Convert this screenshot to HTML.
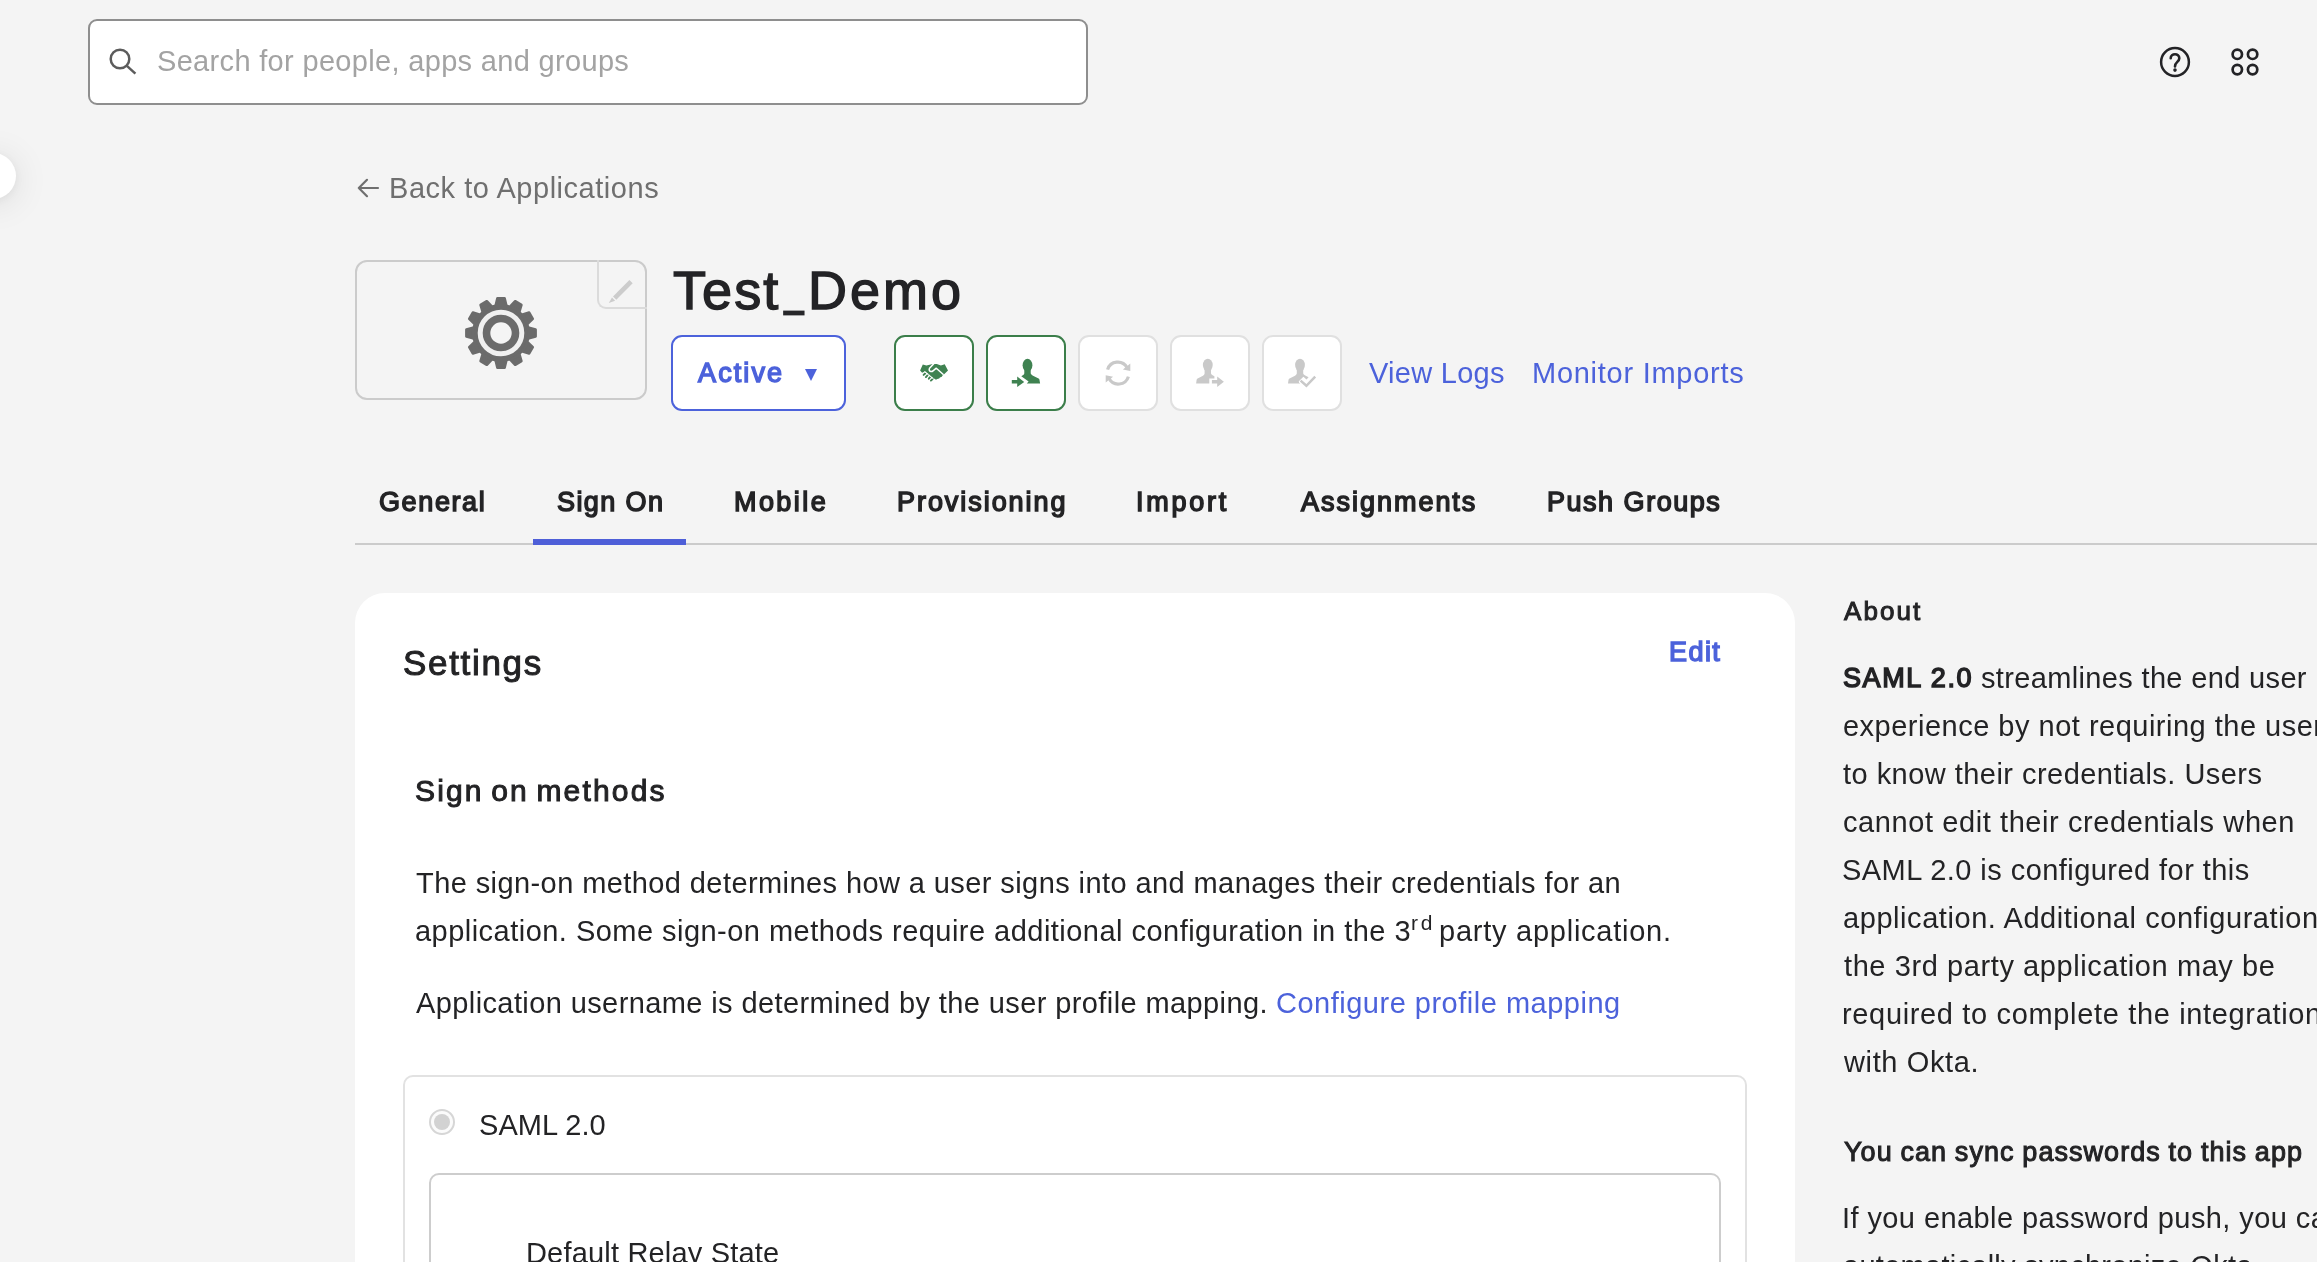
<!DOCTYPE html>
<html lang="en">
<head>
<meta charset="utf-8">
<title>Test_Demo - Sign On</title>
<style>
*{box-sizing:border-box;margin:0;padding:0}
html,body{width:2317px;height:1262px;overflow:hidden;background:#f4f4f4}
body{position:relative;font-family:"Liberation Sans",Arial,sans-serif;color:#232325;font-size:28px}
.abs{position:absolute;white-space:nowrap}
a{text-decoration:none;color:#4c62db}
.t{position:absolute;white-space:nowrap;line-height:1;will-change:transform}

/* top bar */
#search{left:88px;top:19px;width:1000px;height:86px;border:2px solid #8e8e8e;border-radius:9px;background:#fff}
#search svg{position:absolute;left:16px;top:23.75px}
#search .ph{position:absolute;will-change:transform;font-size:29px;color:#a3a3a3;line-height:1;white-space:nowrap}

/* toggle */
#toggle{left:-30px;top:153px;width:46px;height:46px;border-radius:50%;background:#fff;box-shadow:0 4px 36px rgba(0,0,0,.11),0 2px 8px rgba(0,0,0,.05)}

/* back */
.grey{color:#6f6f6f}
.t.b{font-weight:normal;font-size:27px;-webkit-text-stroke:1.45px currentColor}
.blue{color:#4c62db}
.hd{font-weight:normal;-webkit-text-stroke:1px #232325}
p.t,span.t,a.t{font-size:29px}
b.t{font-size:27px;font-weight:normal;-webkit-text-stroke:1.45px currentColor}

/* logo */
#logo{left:355px;top:260px;width:292px;height:140px;border:2px solid #cbcbcb;border-radius:12px}
#logo .edit{position:absolute;right:-2px;top:-2px;width:50px;height:49px;border-left:2px solid #dbdbdb;border-bottom:2px solid #dbdbdb;border-bottom-left-radius:9px}

span.t.ttl{font-size:54px;font-weight:normal;color:#232326;-webkit-text-stroke:1.4px #232326}

#active{left:671px;top:335px;width:175px;height:76px;border:2px solid #4c62db;border-radius:11px;background:#fff}
#active .arr{position:absolute;left:132.4px;top:32px;width:0;height:0;border-left:6.7px solid transparent;border-right:6.7px solid transparent;border-top:12.6px solid #4c62db}

.ib{position:absolute;top:335px;width:80px;height:76px;border-radius:11px;background:#fff;border:2px solid #e0e0e0}
.ib.on{border-color:#3b7e4a}
.ib svg{position:absolute;left:0;top:0}

/* tabs */
#tabline{left:355px;top:543px;width:1962px;height:2px;background:#cbcbcb}
#tabsel{left:533px;top:539px;width:153px;height:6px;background:#4e5fd8}

/* card */
#card{left:355px;top:593px;width:1440px;height:700px;background:#fff;border-radius:30px}
#box1{left:403px;top:1075px;width:1344px;height:300px;border:2px solid #e2e2e2;border-radius:10px}
#box2{left:429px;top:1173px;width:1292px;height:300px;border:2px solid #cdcdcd;border-radius:10px}
#radio{left:429px;top:1109px;width:26px;height:26px;border-radius:50%;border:2px solid #d6d6d6;background:#fbfbfb}
#radio i{position:absolute;left:3px;top:3px;width:16px;height:16px;border-radius:50%;background:#d2d2d2}
</style>
</head>
<body>

<div class="abs" id="search">
  <svg width="34" height="34" viewBox="0 0 34 34" fill="none" stroke="#5c5c5c" stroke-width="2.5" stroke-linecap="butt"><circle cx="14" cy="14" r="9.3"/><path d="M20.6 20.6 L29.4 28.6"/></svg>
  <span class="ph" id="ph" style="left:66.65px;top:26px;letter-spacing:0.326px">Search for people, apps and groups</span>
</div>

<svg class="abs" style="left:2155px;top:42px" width="40" height="40" viewBox="0 0 40 40" fill="none" stroke="#232326" stroke-width="2.5" stroke-linecap="round" stroke-linejoin="round">
  <circle cx="20" cy="20" r="13.9"/>
  <path d="M15.7 16.3 C15.7 11 24.3 11 24.3 16.2 C24.3 19.9 20 19.9 20 24.4" stroke-width="2.6"/>
  <circle cx="20" cy="28.1" r="1.1" fill="#232326" stroke-width="1.4"/>
</svg>
<svg class="abs" style="left:2225px;top:42px" width="40" height="40" viewBox="0 0 40 40" fill="none" stroke="#232326" stroke-width="2.7">
  <circle cx="12.3" cy="12.3" r="4.7"/><circle cx="27.6" cy="12.3" r="4.7"/><circle cx="12.3" cy="27.6" r="4.7"/><circle cx="27.6" cy="27.6" r="4.7"/>
</svg>

<div class="abs" id="toggle"></div>

<svg class="abs" style="left:355px;top:174px" width="28" height="28" viewBox="0 0 28 28" fill="none" stroke="#6f6f6f" stroke-width="2.2" stroke-linecap="round" stroke-linejoin="round"><path d="M23 14 H3.8 M12 5.8 L3.8 14 L12 22.2"/></svg>
<a class="t grey" id="back" style="left:389.35px;top:174px;letter-spacing:0.533px">Back to Applications</a>

<div class="abs" id="logo"><div class="edit"></div></div>
<svg class="abs" style="left:460px;top:292px" width="82" height="82" viewBox="-41 -41 82 82">
<g fill="#6b6b6b" stroke="#6b6b6b" stroke-width="2.6" stroke-linejoin="round"><circle r="27.6"/><path transform="rotate(0)" d="M-5.2 -28 L-3.6 -34.6 L3.6 -34.6 L5.2 -28 Z"/><path transform="rotate(30)" d="M-5.2 -28 L-3.6 -34.6 L3.6 -34.6 L5.2 -28 Z"/><path transform="rotate(60)" d="M-5.2 -28 L-3.6 -34.6 L3.6 -34.6 L5.2 -28 Z"/><path transform="rotate(90)" d="M-5.2 -28 L-3.6 -34.6 L3.6 -34.6 L5.2 -28 Z"/><path transform="rotate(120)" d="M-5.2 -28 L-3.6 -34.6 L3.6 -34.6 L5.2 -28 Z"/><path transform="rotate(150)" d="M-5.2 -28 L-3.6 -34.6 L3.6 -34.6 L5.2 -28 Z"/><path transform="rotate(180)" d="M-5.2 -28 L-3.6 -34.6 L3.6 -34.6 L5.2 -28 Z"/><path transform="rotate(210)" d="M-5.2 -28 L-3.6 -34.6 L3.6 -34.6 L5.2 -28 Z"/><path transform="rotate(240)" d="M-5.2 -28 L-3.6 -34.6 L3.6 -34.6 L5.2 -28 Z"/><path transform="rotate(270)" d="M-5.2 -28 L-3.6 -34.6 L3.6 -34.6 L5.2 -28 Z"/><path transform="rotate(300)" d="M-5.2 -28 L-3.6 -34.6 L3.6 -34.6 L5.2 -28 Z"/><path transform="rotate(330)" d="M-5.2 -28 L-3.6 -34.6 L3.6 -34.6 L5.2 -28 Z"/></g>
<circle r="20.8" fill="none" stroke="#f0f0f0" stroke-width="5"/>
<circle r="10.7" fill="#f4f4f4"/>
</svg>
<svg class="abs" style="left:600px;top:263px" width="46" height="46" viewBox="600 263 46 46">
<path d="M613 296.4 L629.4 280 L632.7 283.3 L616.3 299.7 Z" fill="#cccccc"/>
<path d="M612 297.6 L615.1 300.7 L608.8 302.9 Z" fill="#cccccc"/>
</svg>
<h1 style="font-size:inherit;font-weight:normal"><span class="t ttl" id="title" style="left:672.64px;top:263px;letter-spacing:2.068px">Test</span><span class="t" id="titleu" style="left:784.8px;top:281px;font-size:32px;-webkit-text-stroke:2.75px #262629;color:#262629">_</span><span class="t ttl" id="title2" style="left:807.55px;top:263px;letter-spacing:3.018px">Demo</span></h1>

<div class="abs" id="active"><span class="arr"></span></div>
<span class="t b blue" id="activel" style="left:697.89px;top:360px;letter-spacing:2.121px">Active</span>

<div class="ib on" style="left:894px"></div>
<div class="ib on" style="left:986px"></div>
<div class="ib" style="left:1078px"></div>
<div class="ib" style="left:1170px"></div>
<div class="ib" style="left:1262px"></div>

<svg class="abs" style="left:894px;top:335px" width="80" height="76" viewBox="894 335 80 76">
<path fill="#3f8251" d="M920.1 370.6 L922.8 364.5 L926.4 365.6 L932.8 364.1 L936.8 364.1 L940.9 365.6 L944.7 364.3 L948 370.4 L944.4 373.9 L942.5 375.6 L941.8 376.8 L939.9 377.5 L939.2 378.4 L937.3 379 L936.6 379.6 L935.4 379.4 L925.2 371.2 L922.1 372.7 Z"/>
<path fill="none" stroke="#fff" stroke-width="1.5" stroke-linejoin="round" d="M934 363.5 L929.5 368.3 Q928.5 370.9 930.8 371.5 Q932 371.8 933 370.9 L936.3 368.2 L943.6 374.8"/>
<path fill="none" stroke="#3f8251" stroke-width="1.9" stroke-linecap="round" d="M925.4 373.2 L923.6 374.9 M927.9 374.9 L925.9 377.1 M930.5 376.6 L928.8 378.7 M933.2 378.5 L930.9 380.6"/>
<path fill="none" stroke="#fff" stroke-width="1" d="M924.3 371.6 L935.6 380.7"/>
</svg>
<svg class="abs" style="left:986px;top:335px" width="80" height="76" viewBox="986 335 80 76">
<g fill="#3f8251">
<ellipse cx="1027.5" cy="365.2" rx="4.9" ry="6.4"/>
<path d="M1024.3 369 L1030.7 369 L1030.7 373.6 Q1031.4 375 1033 375.8 L1038.6 378.6 Q1039.4 379 1039.5 380 L1040.1 383.6 L1026.8 383.6 L1028.6 381.4 L1021.3 376.3 L1022.4 375.6 Q1023.9 374.9 1024.3 373.6 Z"/>
<path d="M1011.8 380.1 L1017.2 380.1 L1017.2 376.6 L1024.2 381.9 L1017.2 387.1 L1017.2 383.6 L1011.8 383.6 Z"/>
</g>
</svg>
<svg class="abs" style="left:1078px;top:335px" width="80" height="76" viewBox="1078 335 80 76">
<g fill="none" stroke="#c9c9c9" stroke-width="3.2">
<path d="M1107.6 369.6 A10.6 10.6 0 0 1 1127 367.6"/>
<path d="M1128.4 376.6 A10.6 10.6 0 0 1 1109 378.6"/>
</g>
<path fill="#c9c9c9" d="M1130.3 363.6 L1130.3 371 L1122.9 369.4 Z M1105.7 382.6 L1105.7 375.2 L1113.1 376.8 Z"/>
</svg>
<svg class="abs" style="left:1170px;top:335px" width="80" height="76" viewBox="1170 335 80 76">
<g fill="#c9c9c9">
<ellipse cx="1207.8" cy="365.1" rx="4.9" ry="6.4"/>
<path d="M1204.6 369 L1211 369 L1211 373.4 Q1211.4 374.6 1212.6 375.2 L1214.4 376.2 L1214.4 378.4 L1209.3 378.4 L1209.3 383.5 L1196.1 383.5 L1196.6 380 Q1196.8 379 1197.6 378.6 L1203 375.8 Q1204.4 375 1204.6 373.6 Z"/>
<path d="M1211.9 379.9 L1217.2 379.9 L1217.2 376.6 L1223.9 381.7 L1217.2 386.9 L1217.2 383.5 L1211.9 383.5 Z"/>
</g>
</svg>
<svg class="abs" style="left:1262px;top:335px" width="80" height="76" viewBox="1262 335 80 76">
<g fill="#c9c9c9">
<ellipse cx="1300" cy="365.1" rx="4.9" ry="6.4"/>
<path d="M1296.8 369 L1303.2 369 L1303.2 373.4 Q1303.6 374.6 1304.8 375.2 L1308.6 377.2 L1306.5 379.6 L1303.4 376.8 L1298.6 381.6 L1300.6 383.5 L1288 383.5 L1288.5 380 Q1288.7 379 1289.5 378.6 L1295 375.8 Q1296.4 375 1296.8 373.6 Z"/>
</g>
<path fill="none" stroke="#fff" stroke-width="5" d="M1300.6 380.6 L1306.4 385.8 L1312 380"/><path fill="none" stroke="#c9c9c9" stroke-width="2.5" d="M1300.6 380.6 L1306.4 385.8 L1315.2 376.6"/>
</svg>
<a class="t" id="vlogs" style="left:1368.75px;top:359px;letter-spacing:0.278px">View Logs</a>
<a class="t" id="mimp" style="left:1531.75px;top:359px;letter-spacing:0.736px">Monitor Imports</a>

<div class="abs" id="tabline"></div>
<div class="abs" id="tabsel"></div>
<span class="t b" id="tab1" style="left:379.00px;top:489px;letter-spacing:1.615px">General</span>
<span class="t b" id="tab2" style="left:556.61px;top:489px;letter-spacing:1.397px">Sign On</span>
<span class="t b" id="tab3" style="left:733.66px;top:489px;letter-spacing:2.429px">Mobile</span>
<span class="t b" id="tab4" style="left:896.75px;top:489px;letter-spacing:1.949px">Provisioning</span>
<span class="t b" id="tab5" style="left:1135.50px;top:489px;letter-spacing:2.747px">Import</span>
<span class="t b" id="tab6" style="left:1300.86px;top:489px;letter-spacing:1.979px">Assignments</span>
<span class="t b" id="tab7" style="left:1547.16px;top:489px;letter-spacing:1.515px">Push Groups</span>

<div class="abs" id="card"></div>
<h2 class="t hd" id="settings" style="left:402.75px;top:645px;letter-spacing:1.684px;font-size:35px">Settings</h2>
<a class="t b" id="edit" style="left:1668.88px;top:639px;letter-spacing:1.431px">Edit</a>
<h3 class="t hd" id="som" style="left:414.50px;top:776px;letter-spacing:2.168px;font-size:30px;word-spacing:-3px">Sign on methods</h3>

<p class="t" id="p1a" style="left:415.96px;top:869px;letter-spacing:0.413px">The sign-on method determines how a user signs into and manages their credentials for an</p>
<p class="t" id="p1b" style="left:415.00px;top:917px;letter-spacing:0.470px">application. Some sign-on methods require additional configuration in the 3</p>
<sup class="t" id="p1s" style="left:1410.77px;top:912px;letter-spacing:2.733px;font-size:21px">rd</sup>
<p class="t" id="p1c" style="left:1438.75px;top:917px;letter-spacing:0.752px">party application.</p>
<p class="t" id="p2a" style="left:416.00px;top:989px;letter-spacing:0.397px">Application username is determined by the user profile mapping.</p>
<a class="t" id="p2b" style="left:1275.65px;top:989px;letter-spacing:0.503px">Configure profile mapping</a>

<div class="abs" id="box1"></div>
<div class="abs" id="radio"><i></i></div>
<span class="t" id="saml" style="left:478.62px;top:1111px;letter-spacing:0.054px">SAML 2.0</span>
<div class="abs" id="box2"></div>
<span class="t" id="drs" style="left:526.25px;top:1239px;letter-spacing:0.182px">Default Relay State</span>

<h3 class="t hd" id="about" style="left:1843.70px;top:598px;letter-spacing:2.095px;font-size:26px">About</h3>
<b class="t" id="s1a" style="left:1842.70px;top:665px;letter-spacing:1.565px">SAML 2.0</b>
<p class="t" id="s1b" style="left:1980.60px;top:664px;letter-spacing:0.346px">streamlines the end user</p>
<p class="t" id="s2" style="left:1842.70px;top:712px;letter-spacing:0.494px"><span>experience by not requiring the</span> user</p>
<p class="t" id="s3" style="left:1843.14px;top:760px;letter-spacing:0.465px">to know their credentials. Users</p>
<p class="t" id="s4" style="left:1842.70px;top:808px;letter-spacing:0.588px">cannot edit their credentials when</p>
<p class="t" id="s5" style="left:1842.02px;top:856px;letter-spacing:0.447px">SAML 2.0 is configured for this</p>
<p class="t" id="s6" style="left:1842.96px;top:904px;letter-spacing:0.565px"><span>application. Additional</span> configuration in</p>
<p class="t" id="s7" style="left:1843.70px;top:952px;letter-spacing:0.589px">the 3rd party application may be</p>
<p class="t" id="s8" style="left:1842.10px;top:1000px;letter-spacing:0.655px"><span>required to complete the</span> integration</p>
<p class="t" id="s9" style="left:1844.10px;top:1048px;letter-spacing:0.622px">with Okta.</p>
<h3 class="t hd" id="h2" style="left:1843.50px;top:1139px;letter-spacing:1.047px;font-size:27px;word-spacing:-0.8px">You can sync passwords to this app</h3>
<p class="t" id="s10" style="left:1841.64px;top:1204px;letter-spacing:0.414px"><span>If you enable password push,</span> you can</p>
<p class="t" id="s11" style="left:1842.70px;top:1252px;letter-spacing:0.279px">automatically synchronize Okta</p>

</body>
</html>
